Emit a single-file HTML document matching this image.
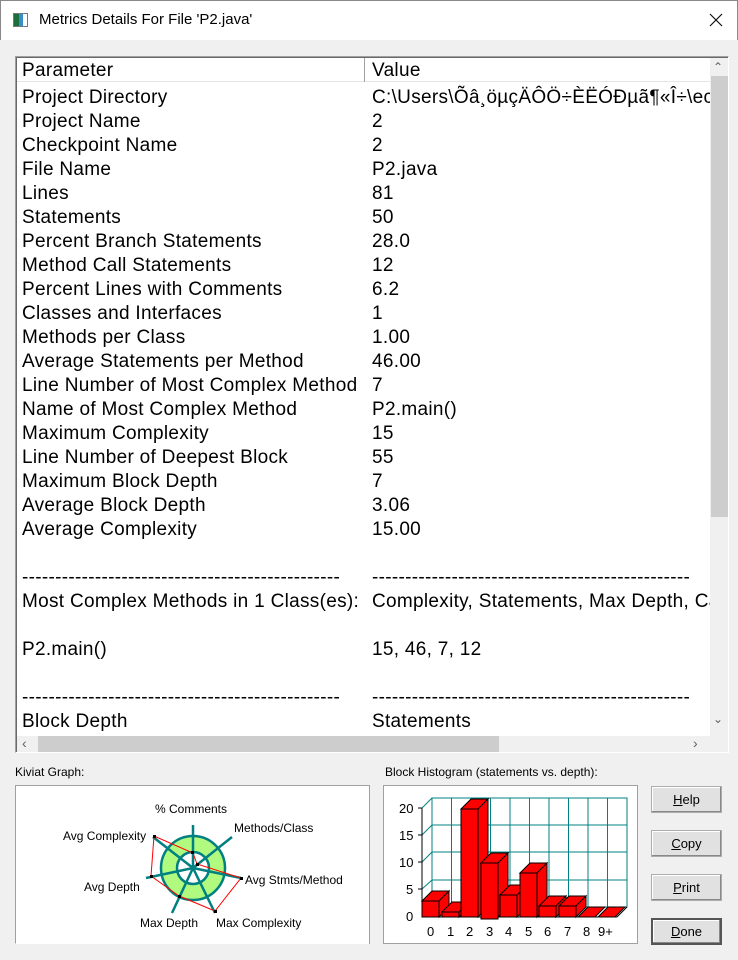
<!DOCTYPE html>
<html><head><meta charset="utf-8"><style>
*{margin:0;padding:0;box-sizing:border-box}
body{width:738px;height:960px;background:#f0f0f0;font-family:"Liberation Sans",Arial,sans-serif;position:relative;overflow:hidden}
.a{position:absolute}
#title{left:0;top:0;width:738px;height:40px;background:#fff;border:1px solid #888;border-bottom:none}
#list{left:15px;top:56px;width:714px;height:697px;background:#fff;border:1px solid #a0a0a0;border-right-color:#fff;border-bottom-color:#fff;box-shadow:inset 1px 1px 0 #696969}
.r{position:absolute;font-size:19px;letter-spacing:0.3px;line-height:24px;white-space:nowrap;color:#000;margin-top:1px}
.c1{left:22px}.c2{left:372px}
.lbl{font-size:12px;color:#000}
.btn{position:absolute;left:651px;width:71px;height:27px;background:#e1e1e1;border:1px solid #adadad;font-size:13px;text-align:center;line-height:25px;box-shadow:inset -1px -1px 0 #888,inset 1px 1px 0 #fff}
</style></head><body>
<div id="title" class="a">
<div class="a" style="left:12px;top:12px;width:15px;height:14px;border:1px solid #777;background:linear-gradient(90deg,#1c6e3a 0 5px,#3a8ec8 5px 9px,#fff 9px)"></div>
<div class="a" style="left:38px;top:10px;font-size:15px">Metrics Details For File 'P2.java'</div>
<svg class="a" style="left:708px;top:12px" width="14" height="14"><path d="M1 1L13 13M13 1L1 13" stroke="#111" stroke-width="1.2"/></svg>
</div>
<div id="list" class="a"></div>
<div class="a" style="left:17px;top:58px;width:693px;height:678px;overflow:hidden">
 <div class="a" style="left:0;top:0;width:693px;height:24px;background:#fff;border-bottom:1px solid #e5e5e5"></div>
 <div class="a" style="left:347px;top:0;width:1px;height:24px;background:#a0a0a0"></div>
 <div class="a" style="left:348px;top:0;width:1px;height:24px;background:#fff"></div>
</div>
<div class="r c1" style="top:58px">Parameter</div><div class="r c2" style="top:58px">Value</div>
<div class="a" style="left:17px;top:85px;width:693px;height:651px;overflow:hidden">
<div style="position:relative;left:-17px;top:-85px">
<div class="r c1" style="top:85px">Project Directory</div><div class="r c2" style="top:85px">C:\Users\Õâ¸öµçÄÔÖ÷ÈËÓÐµã¶«Î÷\eclipse</div>
<div class="r c1" style="top:109px">Project Name</div><div class="r c2" style="top:109px">2</div>
<div class="r c1" style="top:133px">Checkpoint Name</div><div class="r c2" style="top:133px">2</div>
<div class="r c1" style="top:157px">File Name</div><div class="r c2" style="top:157px">P2.java</div>
<div class="r c1" style="top:181px">Lines</div><div class="r c2" style="top:181px">81</div>
<div class="r c1" style="top:205px">Statements</div><div class="r c2" style="top:205px">50</div>
<div class="r c1" style="top:229px">Percent Branch Statements</div><div class="r c2" style="top:229px">28.0</div>
<div class="r c1" style="top:253px">Method Call Statements</div><div class="r c2" style="top:253px">12</div>
<div class="r c1" style="top:277px">Percent Lines with Comments</div><div class="r c2" style="top:277px">6.2</div>
<div class="r c1" style="top:301px">Classes and Interfaces</div><div class="r c2" style="top:301px">1</div>
<div class="r c1" style="top:325px">Methods per Class</div><div class="r c2" style="top:325px">1.00</div>
<div class="r c1" style="top:349px">Average Statements per Method</div><div class="r c2" style="top:349px">46.00</div>
<div class="r c1" style="top:373px">Line Number of Most Complex Method</div><div class="r c2" style="top:373px">7</div>
<div class="r c1" style="top:397px">Name of Most Complex Method</div><div class="r c2" style="top:397px">P2.main()</div>
<div class="r c1" style="top:421px">Maximum Complexity</div><div class="r c2" style="top:421px">15</div>
<div class="r c1" style="top:445px">Line Number of Deepest Block</div><div class="r c2" style="top:445px">55</div>
<div class="r c1" style="top:469px">Maximum Block Depth</div><div class="r c2" style="top:469px">7</div>
<div class="r c1" style="top:493px">Average Block Depth</div><div class="r c2" style="top:493px">3.06</div>
<div class="r c1" style="top:517px">Average Complexity</div><div class="r c2" style="top:517px">15.00</div>
<div class="r c1" style="top:565px">------------------------------------------------</div><div class="r c2" style="top:565px">------------------------------------------------</div>
<div class="r c1" style="top:589px">Most Complex Methods in 1 Class(es):</div><div class="r c2" style="top:589px">Complexity, Statements, Max Depth, Calls</div>
<div class="r c1" style="top:637px">P2.main()</div><div class="r c2" style="top:637px">15, 46, 7, 12</div>
<div class="r c1" style="top:685px">------------------------------------------------</div><div class="r c2" style="top:685px">------------------------------------------------</div>
<div class="r c1" style="top:709px">Block Depth</div><div class="r c2" style="top:709px">Statements</div>
</div></div>
<!-- v scrollbar -->
<div class="a" style="left:710px;top:58px;width:18px;height:678px;background:#f0f0f0"></div>
<div class="a" style="left:711px;top:76px;width:17px;height:441px;background:#cdcdcd"></div>
<div class="a" style="left:713px;top:60px;font-size:12px;color:#606060">&#8963;</div>
<div class="a" style="left:713px;top:712px;font-size:12px;color:#606060">&#8964;</div>
<!-- h scrollbar -->
<div class="a" style="left:17px;top:736px;width:711px;height:16px;background:#f0f0f0"></div>
<div class="a" style="left:38px;top:736px;width:461px;height:16px;background:#cdcdcd"></div>
<div class="a" style="left:22px;top:735px;font-size:14px;color:#606060">‹</div>
<div class="a" style="left:693px;top:735px;font-size:14px;color:#606060">›</div>

<div class="a lbl" style="left:15px;top:765px">Kiviat Graph:</div>
<div class="a lbl" style="left:385px;top:765px">Block Histogram (statements vs. depth):</div>

<svg class="a" style="left:15px;top:785px" width="355" height="159">
<rect x="0.5" y="0.5" width="354" height="158" fill="#fff" stroke="#a0a0a0"/>
<line x1="0.5" y1="158.5" x2="354" y2="158.5" stroke="#fff"/>
<g transform="translate(178,83)">
<circle r="24" fill="none" stroke="#b0fa80" stroke-width="16"/>
<circle r="32" fill="none" stroke="#008080" stroke-width="2.5"/>
<circle r="16" fill="none" stroke="#008080" stroke-width="2.5"/>
<g stroke="#008080" stroke-width="2.5">
<line x1="0" y1="0" x2="0" y2="-43"/>
<line x1="0" y1="0" x2="39" y2="-31"/>
<line x1="0" y1="0" x2="48" y2="10"/>
<line x1="0" y1="0" x2="22" y2="45"/>
<line x1="0" y1="0" x2="-21" y2="45"/>
<line x1="0" y1="0" x2="-47" y2="10"/>
<line x1="0" y1="0" x2="-40" y2="-31"/>
</g>
<polygon points="0,-15 4,-4 48,10 22,43 -14,28 -42,8 -39,-32" fill="none" stroke="#f00" stroke-width="1"/>
<g fill="#000"><rect x="-2" y="-17" width="3" height="3"/><rect x="3" y="-5" width="3" height="3"/><rect x="47" y="9" width="3" height="3"/><rect x="21" y="42" width="3" height="3"/><rect x="-15" y="27" width="3" height="3"/><rect x="-43" y="7" width="3" height="3"/><rect x="-40" y="-33" width="3" height="3"/></g>
</g>
<g font-size="12" font-family="Liberation Sans,Arial,sans-serif">
<text x="140" y="28">% Comments</text>
<text x="219" y="47">Methods/Class</text>
<text x="48" y="55">Avg Complexity</text>
<text x="230" y="99">Avg Stmts/Method</text>
<text x="69" y="106">Avg Depth</text>
<text x="125" y="142">Max Depth</text>
<text x="201" y="142">Max Complexity</text>
</g>
</svg>

<svg class="a" style="left:383px;top:785px" width="255" height="159">
<rect x="0.5" y="0.5" width="254" height="158" fill="#fff" stroke="#a0a0a0"/>
<g stroke="#008080" stroke-width="1" fill="none">
<rect x="49" y="13" width="195" height="109"/>
<line x1="68.5" y1="13" x2="68.5" y2="122"/><line x1="88" y1="13" x2="88" y2="122"/><line x1="107.5" y1="13" x2="107.5" y2="122"/><line x1="127" y1="13" x2="127" y2="122"/><line x1="146.5" y1="13" x2="146.5" y2="122"/><line x1="166" y1="13" x2="166" y2="122"/><line x1="185.5" y1="13" x2="185.5" y2="122"/><line x1="205" y1="13" x2="205" y2="122"/><line x1="224.5" y1="13" x2="224.5" y2="122"/>
<line x1="49" y1="40" x2="244" y2="40"/><line x1="49" y1="67" x2="244" y2="67"/><line x1="49" y1="95" x2="244" y2="95"/>
<line x1="39" y1="23" x2="49" y2="13"/><line x1="39" y1="50" x2="49" y2="40"/><line x1="39" y1="77" x2="49" y2="67"/><line x1="39" y1="104" x2="49" y2="95"/>
</g>
<g stroke="#000" stroke-width="1" fill="none"><line x1="39" y1="23" x2="39" y2="132"/><line x1="39" y1="132" x2="234" y2="132"/><line x1="234" y1="132" x2="244" y2="122"/>
<line x1="35" y1="23" x2="39" y2="23"/><line x1="35" y1="50" x2="39" y2="50"/><line x1="35" y1="77" x2="39" y2="77"/><line x1="35" y1="104" x2="39" y2="104"/></g>
<g fill="#f00" stroke="#000" stroke-width="1">
<path d="M39 132V116h17v16z M39 116l10-10h17l-10 10z M56 116l10-10v16l-10 10z"/>
<path d="M59 132V127h17v5z M59 127l10-10h17l-10 10z M76 127l10-10v5l-10 10z"/>
<path d="M78 132V24h17v108z M78 24l10-10h17l-10 10z M95 24l10-10v108l-10 10z"/>
<path d="M98 134V78h17v56z M98 78l10-10h17l-10 10z M115 78l10-10v54l-10 10z"/>
<path d="M117 132V110h17v22z M117 110l10-10h17l-10 10z M134 110l10-10v22l-10 10z"/>
<path d="M137 132V88h17v44z M137 88l10-10h17l-10 10z M154 88l10-10v44l-10 10z"/>
<path d="M156 132V121h17v11z M156 121l10-10h17l-10 10z M173 121l10-10v11l-10 10z"/>
<path d="M176 132V121h17v11z M176 121l10-10h17l-10 10z M193 121l10-10v11l-10 10z"/>
<path d="M195 132l10-10h17l-10 10z"/>
<path d="M215 132l10-10h17l-10 10z"/>
</g>
<g font-size="13" font-family="Liberation Sans,Arial,sans-serif">
<text x="16" y="28">20</text><text x="16" y="55">15</text><text x="16" y="82">10</text><text x="23" y="109">5</text><text x="23" y="136">0</text>
<text x="44" y="151">0</text><text x="64" y="151">1</text><text x="83" y="151">2</text><text x="103" y="151">3</text><text x="122" y="151">4</text><text x="142" y="151">5</text><text x="161" y="151">6</text><text x="181" y="151">7</text><text x="200" y="151">8</text><text x="215" y="151">9+</text>
</g>
</svg>

<div class="btn" style="top:786px"><u>H</u>elp</div>
<div class="btn" style="top:830px"><u>C</u>opy</div>
<div class="btn" style="top:874px"><u>P</u>rint</div>
<div class="btn" style="top:918px;border:2px solid #555;line-height:23px"><u>D</u>one</div>
</body></html>
